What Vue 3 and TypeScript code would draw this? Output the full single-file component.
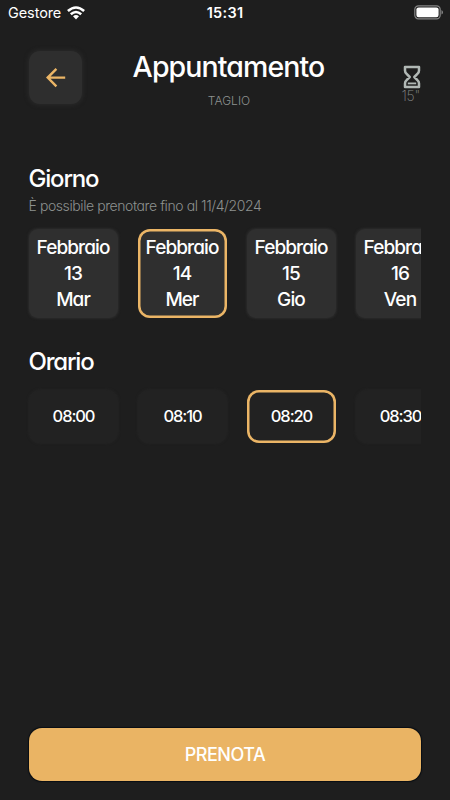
<script setup lang="ts">
import { ref } from 'vue'

interface Day {
  month: string
  day: number
  weekday: string
}

const days: Day[] = [
  { month: 'Febbraio', day: 13, weekday: 'Mar' },
  { month: 'Febbraio', day: 14, weekday: 'Mer' },
  { month: 'Febbraio', day: 15, weekday: 'Gio' },
  { month: 'Febbraio', day: 16, weekday: 'Ven' },
]
const times: string[] = ['08:00', '08:10', '08:20', '08:30']

const selectedDay = ref(1)
const selectedTime = ref(2)
</script>

<template>
  <main class="screen">
    <div class="status">
      <div class="carrier">
        <span>Gestore</span>
        <svg class="wifi" viewBox="0 0 18 14" width="18" height="14">
          <g fill="none" stroke="#fff" stroke-width="2.6">
            <path d="M0.9 5Q9-2 17.1 5" />
            <path d="M3.8 8.3Q9 3.7 14.2 8.3" />
          </g>
          <path d="M6 10.3Q9 7.8 12 10.3L9 13.4Z" fill="#fff" />
        </svg>
      </div>
      <span class="clock">15:31</span>
      <svg class="battery" viewBox="0 0 30 15" width="30" height="15">
        <rect x="0.8" y="0.8" width="25.4" height="13" rx="3.6" fill="none" stroke="#858585" stroke-width="1.2" />
        <rect x="2.4" y="2.4" width="22.2" height="9.8" rx="2.2" fill="#fff" />
        <path d="M27.5 5v4.6q1.5-.7 1.5-2.3t-1.5-2.3Z" fill="#858585" />
      </svg>
    </div>

    <header class="header">
      <button class="back" aria-label="Indietro">
        <svg viewBox="0 0 20 20" width="20" height="20" fill="none" stroke="#ebb566" stroke-width="2.4">
          <path d="M19.2 9.6H2M10.4 0.9L1.7 9.6l8.7 8.7" />
        </svg>
      </button>
      <div class="heading">
        <h1>Appuntamento</h1>
        <span class="service">TAGLIO</span>
      </div>
      <div class="duration">
        <svg viewBox="0 0 18 24" width="18" height="24" fill="none" stroke="#b1b8b5" stroke-width="2.5" stroke-linejoin="round">
          <path d="M2 2H16V5.6Q16 7.4 14.6 8.7L11.3 12L14.6 15.3Q16 16.6 16 18.4V22H2V18.4Q2 16.6 3.4 15.3L6.7 12L3.4 8.7Q2 7.4 2 5.6Z" />
          <path d="M4.8 18.4H13.2" stroke-width="1.8" />
        </svg>
        <span>15"</span>
      </div>
    </header>

    <section class="days">
      <h2>Giorno</h2>
      <p>È possibile prenotare fino al 11/4/2024</p>
      <div class="strip">
        <button
          v-for="(d, i) in days"
          :key="d.day"
          class="day"
          :class="{ selected: i === selectedDay }"
          @click="selectedDay = i"
        >
          <span class="month">{{ d.month }}</span>
          <span class="number">{{ d.day }}</span>
          <span class="weekday">{{ d.weekday }}</span>
        </button>
      </div>
    </section>

    <section class="hours">
      <h2 class="orario">Orario</h2>
      <div class="strip">
        <button
          v-for="(t, i) in times"
          :key="t"
          class="time"
          :class="{ selected: i === selectedTime }"
          @click="selectedTime = i"
        >
          {{ t }}
        </button>
      </div>
    </section>

    <button class="book"><span>PRENOTA</span></button>
  </main>
</template>

<style>
body {
  background: #1e1e1e;
}
</style>

<style scoped>
.screen {
  box-sizing: border-box;
  display: flex;
  flex-direction: column;
  height: 800px;
  padding: 0 29px 19px;
  overflow: hidden;
  background: #1e1e1e;
  color: #fff;
  font-family: Inter, 'Liberation Sans', sans-serif;
  font-feature-settings: 'cv11';
}
button {
  box-sizing: border-box;
  margin: 0;
  padding: 0;
  border: 0;
  color: inherit;
  font: inherit;
  font-feature-settings: inherit;
}
h1, h2, p {
  margin: 0;
}
svg {
  display: block;
}
.status {
  display: grid;
  grid-template-columns: 1fr auto 1fr;
  align-items: center;
  height: 25px;
  margin: 0 -22px;
  font-size: 14.5px;
  font-feature-settings: normal;
}
.carrier {
  display: flex;
  align-items: center;
  gap: 6px;
  padding-left: 1px;
  letter-spacing: -0.1px;
}
.clock {
  font-weight: 600;
  letter-spacing: 0.3px;
}
.battery {
  justify-self: end;
  margin-right: -1px;
}
.header {
  display: grid;
  grid-template-columns: 53px 1fr 53px;
  height: 100px;
  padding-top: 26px;
  box-sizing: border-box;
}
.back {
  display: grid;
  place-items: center;
  width: 53px;
  height: 53px;
  border-radius: 11px;
  background: #2e2e2e;
  box-shadow: 0 0 4px 1px #2a2a2a;
}
.heading {
  display: flex;
  flex-direction: column;
  align-items: center;
  padding-left: 8px;
}
h1 {
  margin-right: 1px;
  font-size: 28.5px;
  line-height: 31px;
  font-weight: 500;
  letter-spacing: -0.9px;
  white-space: nowrap;
}
.service {
  margin-top: 10px;
  font-size: 12px;
  line-height: 18px;
  font-weight: 300;
  color: #8d918f;
}
.duration {
  display: flex;
  flex-direction: column;
  align-items: flex-end;
  padding-top: 14px;
  font-size: 14px;
  line-height: 14px;
  font-weight: 200;
  color: #858987;
}
.duration span {
  margin-top: 0;
  padding-right: 1px;
  letter-spacing: -0.2px;
}
.days {
  padding-top: 39px;
}
h2 {
  margin-left: -0.5px;
  font-size: 24px;
  line-height: 30px;
  font-weight: 500;
  letter-spacing: -1.2px;
}
.days p {
  margin-top: 3px;
  margin-left: -0.5px;
  font-size: 14px;
  line-height: 18px;
  font-weight: 300;
  letter-spacing: -0.42px;
  color: #8d918f;
  white-space: nowrap;
}
.strip {
  display: flex;
  gap: 20px;
  overflow: hidden;
  margin: 0 0 0 -5px;
  padding: 5px 0 5px 5px;
}
.days .strip {
  margin-top: 9px;
}
.day {
  display: flex;
  flex: none;
  flex-direction: column;
  align-items: center;
  justify-content: center;
  width: 89px;
  height: 89px;
  padding: 1px 1px 0 0;
  border-radius: 9px;
  background: #2f2f2f;
  box-shadow: 0 0 2px 0.5px #2a2a2a;
  font-size: 19px;
  line-height: 26px;
  font-weight: 500;
  letter-spacing: -0.9px;
}
.selected.selected {
  border-radius: 12px;
  box-shadow: inset 0 0 0 2.5px #ebb566;
}
.hours {
  padding-top: 24px;
}
.hours .strip {
  margin-top: 8px;
}
.time {
  flex: none;
  width: 89px;
  height: 53px;
  padding-bottom: 1px;
  border-radius: 12px;
  background: #222;
  box-shadow: 0 0 3px #292929;
  font-size: 16.5px;
  font-weight: 500;
  letter-spacing: -1.1px;
}
.book {
  height: 53px;
  margin-top: auto;
  border-radius: 13px;
  background: #eab464;
  box-shadow: 0 0 1px 0.5px #080d13;
  font-size: 18px;
  font-weight: 500;
  letter-spacing: -0.5px;
}
</style>
